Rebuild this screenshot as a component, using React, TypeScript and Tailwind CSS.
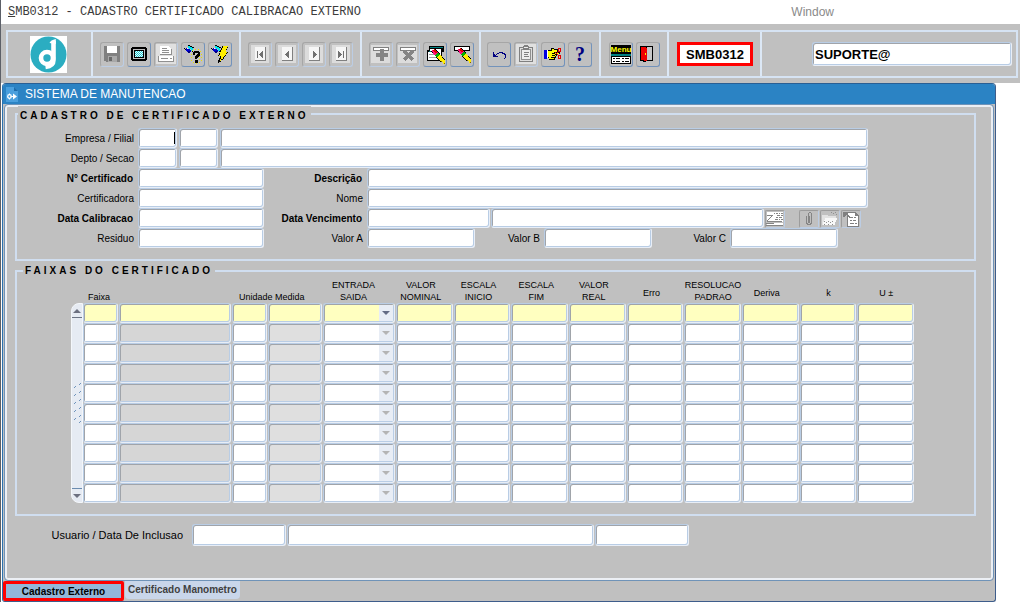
import { useState } from "react";
import type { ReactNode } from "react";
import clsx from "clsx";

const field =
  "block h-5 min-w-0 rounded-[3px] border border-t-[#b9cde5] border-l-[#b9cde5] border-r-[#e8eef7] border-b-[#e8eef7] px-1 text-[11px] outline-none shadow-[inset_1px_1px_0_#a0a4aa,inset_-1px_-1px_0_#b9cde5]";

const columns = [
  "VALOR\nNOMINAL",
  "ESCALA\nINICIO",
  "ESCALA\nFIM",
  "VALOR\nREAL",
  "Erro",
  "RESOLUCAO\nPADRAO",
  "Deriva",
  "k",
  "U ±",
];

const rows = [0, 1, 2, 3, 4, 5, 6, 7, 8, 9];

function Label({ id, bold, className, children }: { id: string; bold?: boolean; className: string; children: ReactNode }) {
  return (
    <label
      htmlFor={id}
      className={clsx("h-5 shrink-0 whitespace-nowrap text-right leading-[22px]", bold ? "pr-[5px] font-bold" : "pr-1", className)}
    >
      {children}
    </label>
  );
}

function ToolButton({ title, disabled, children }: { title: string; disabled?: boolean; children: ReactNode }) {
  return (
    <button
      type="button"
      title={title}
      disabled={disabled}
      className={clsx(
        "flex h-[25px] w-6 shrink-0 items-center justify-center rounded-[3px] border border-t-[#a6a6a6] border-l-[#a6a6a6]",
        disabled ? "border-r-[#bccde4] border-b-[#bccde4]" : "border-r-[#7393bb] border-b-[#7393bb]"
      )}
    >
      <svg width="20" height="20" viewBox="0 0 20 20" shapeRendering="crispEdges" className="shrink-0 overflow-visible">
        {children}
      </svg>
    </button>
  );
}

function NavButton({ title, d }: { title: string; d: string }) {
  return (
    <ToolButton title={title} disabled>
      <path fill="#dcdcdc" d="M1 1h18v18H1z" />
      <path fill="#f6f6f6" d="M5 3h10v13H5z" />
      <path fill="#808080" d="M15 3h1v14H5v-1h10z" />
      <path fill="#707070" d={d} />
    </ToolButton>
  );
}

/* lanterna azul usada nos dois botões de consulta */
function Lantern() {
  return (
    <>
      <path fill="#000" d="M5 1h2v1H5zM7 2h2v1H7zM9 3h2v1H9zM1 4h1v1H1zM2 5h1v1H2zM3 6h1v1H3zM9 7h1v1H9z" />
      <path fill="#00e5f0" d="M5 2h2v1h2v1h1v3H8V5H6V4H5z" />
      <path fill="#0000d0" d="M3 4h2v1h2v1h1v2H7v1H5V8H4V7H3z" />
      <path fill="#000080" d="M5 7h2v2H5z" />
      <path fill="#fff" d="M4 4h1v1H4z" />
    </>
  );
}

/* lápis colorido, em diagonal */
function Pencil() {
  return (
    <>
      <path stroke="#000" strokeWidth="5" d="M6 4l10 11" />
      <path stroke="#ff1080" strokeWidth="4" d="M6 4l3.500 4" />
      <path stroke="#e00000" strokeWidth="2" d="M7 4l3 3" />
      <path stroke="#00b000" strokeWidth="4" d="M9.500 8l2 2" />
      <path stroke="#ffee00" strokeWidth="4" d="M11.500 10l4 4.500" />
      <path fill="#ffee00" d="M14 14h4v4h-2v-2h-2z" />
      <path fill="#806000" d="M17 17h1v1h-1zM14 15h1v1h-1z" />
    </>
  );
}

function Group({ className, children }: { className: string; children: ReactNode }) {
  return <div className={clsx("flex shrink-0 items-center border-r-2 border-[#dce8f6]", className)}>{children}</div>;
}

function Toolbar() {
  return (
    <div className="bg-[#c0c0c0] pt-[6px] pr-[2px] pb-[5px] pl-[5px]">
      <div className="flex h-12 border-2 border-[#d6e3f3]">
        <Group className="w-[85px] pl-[22px]">
          <svg width="37" height="37" viewBox="0 0 37 37">
            <path fill="#fff" d="M0 0h37v37H0z" />
            <circle cx="18.5" cy="18.5" r="18" fill="#2badc1" />
            <circle cx="17" cy="22" r="6" fill="none" stroke="#fff" strokeWidth="4.6" />
            <path d="M23.500 5v19q0 6-8 7" fill="none" stroke="#fff" strokeWidth="4.6" />
            <path d="M19.500 7q1-3 6.300-4v5z" fill="#fff" />
          </svg>
        </Group>
        <Group className="w-[148px] gap-[3px] pl-[7px]">
          <ToolButton title="Salvar" disabled>
            <path fill="#808080" d="M2 2h16v16H4v-1H2z" />
            <path fill="#fff" d="M5 2h10v7H5z" />
            <path fill="#a8a8a8" d="M6 12h9v6H6z" />
            <path fill="#686868" d="M7 13h3v4H7z" />
          </ToolButton>
          <ToolButton title="Tela">
            <path fill="#000" d="M3 3h14v1h1v12h-1v1H3v-1H2V4h1z" />
            <path fill="#c0c0c0" d="M4 5h12v10H4z" />
            <path fill="#000" d="M5 6h10v8H5z" />
            <path fill="#e8ffff" d="M6 7h8v6H6z" />
            <path
              fill="#20c8d0"
              d="M6 7h1v1H6zM8 7h1v1H8zM10 7h1v1h-1zM12 7h1v1h-1zM7 8h1v1H7zM9 8h1v1H9zM11 8h1v1h-1zM13 8h1v1h-1zM6 9h1v1H6zM8 9h1v1H8zM10 9h1v1h-1zM12 9h1v1h-1zM7 10h1v1H7zM9 10h1v1H9zM11 10h1v1h-1zM13 10h1v1h-1zM6 11h1v1H6zM8 11h1v1H8zM10 11h1v1h-1zM12 11h1v1h-1zM7 12h1v1H7zM9 12h1v1H9zM11 12h1v1h-1zM13 12h1v1h-1z"
            />
          </ToolButton>
          <ToolButton title="Imprimir" disabled>
            <path fill="#e0e0e0" d="M0 0h20v20H0z" />
            <path fill="#fff" d="M4 2h8l3 3v6H4zM2 12h16v6H2z" />
            <path fill="#909090" d="M6 4h5v1H6zM6 6h7v1H6zM6 8h7v1H6zM4 10h12v1H4zM2 12h1v6H2zM17 12h1v6h-1zM2 17h16v1H2zM5 14h7v1H5zM14 14h2v1h-2zM15 5h1v5h-1z" />
          </ToolButton>
          <ToolButton title="Entrar consulta">
            <Lantern />
            <path
              fill="#e8e000"
              d="M9 6h1v1H9zM12 5h1v1h-1zM15 5h1v1h-1zM17 7h1v1h-1zM8 10h1v1H8zM8 13h1v1H8zM8 16h1v1H8zM10 18h1v1h-1zM13 19h1v1h-1zM16 18h1v1h-1zM18 10h1v1h-1zM18 13h1v1h-1zM18 16h1v1h-1zM16 15h1v1h-1zM16 12h1v1h-1z"
            />
            <path fill="#000" d="M11 7h5v1h1v4h-1v1h-1v1h-1v1h-2v-3h1v-1h1v-1h1V9h-3v2h-2V8h1zM12 16h3v3h-3z" />
          </ToolButton>
          <ToolButton title="Executar consulta">
            <Lantern />
            <path fill="#000" d="M12 2h6v2h-1v2h-1v2h2v1h-1v1h-1v2h-1v1h-1v2h-1v1h-2v2H9v1H8v-3h1v-2h1v-2H8v-1h1V9h1V6h1V4h1z" />
            <path fill="#ffee00" d="M13 2h5v1h-1v2h-1v3h1v1h-1v2h-1v1h-1v1h-1v2h-2v2h-1v-2h1v-3H9v-1h1V8h1V6h1V4h1z" />
          </ToolButton>
        </Group>
        <Group className="w-[121px] gap-[3px] pl-[7px]">
          <NavButton title="Primeiro" d="M7 7h1v7H7zM12 7h1v7h-1v-1h-1v-1h-1v-1H9v-1h1V9h1V8h1z" />
          <NavButton title="Anterior" d="M11 7h1v7h-1v-1h-1v-1H9v-1H8v-1h1V9h1V8h1z" />
          <NavButton title="Próximo" d="M9 7h1v1h1v1h1v1h1v1h-1v1h-1v1h-1v1H9z" />
          <NavButton title="Último" d="M12 7h1v7h-1zM7 7h1v1h1v1h1v1h1v1h-1v1H9v1H8v1H7z" />
        </Group>
        <Group className="w-[119px] gap-[3px] pl-[7px]">
          <ToolButton title="Inserir" disabled>
            <path fill="#dcdcdc" d="M0 1h19v18H0z" />
            <path fill="#808080" d="M2 3h16v4H2z" />
            <path fill="#fff" d="M3 4h14v2H3z" />
            <path fill="#858585" d="M9 5h4v4h4v4h-4v4H9v-4H5V9h4z" />
          </ToolButton>
          <ToolButton title="Excluir" disabled>
            <path fill="#dcdcdc" d="M0 1h19v18H0z" />
            <path fill="#808080" d="M2 3h16v4H2z" />
            <path fill="#fff" d="M3 4h14v2H3z" />
            <path stroke="#858585" strokeWidth="3" d="M6 7l9 9M15 7l-9 9" />
          </ToolButton>
          <ToolButton title="Limpar tela">
            <path fill="#000" d="M4 2h15v6h-2v9H2V6h2z" />
            <path fill="#008080" d="M5 3h13v1H5z" />
            <path fill="#fff" d="M5 5h11v3H5zM3 8h13v8H3z" />
            <path fill="#a0a0a0" d="M4 10h5v1H4zM4 13h8v1H4z" />
            <path fill="#008080" d="M4 7h5v1H4z" />
            <g transform="translate(2 2)">
              <Pencil />
            </g>
          </ToolButton>
          <ToolButton title="Limpar registro">
            <path fill="#000" d="M2 2h16v5H2z" />
            <path fill="#fff" d="M3 3h14v3H3z" />
            <g transform="translate(1 1)">
              <Pencil />
            </g>
          </ToolButton>
        </Group>
        <Group className="w-[120px] gap-[3px] pl-[6px]">
          <ToolButton title="Desfazer">
            <path fill="#000080" d="M4 8h1v2h1v1h1v1h2v1H4zM7 10h1V9h2V8h4v1h2v1h1v4h-1v1h-1v-1h1v-3h-1v-1h-2V9h-3v1H8v1H7z" />
          </ToolButton>
          <ToolButton title="Colar" disabled>
            <path fill="#e0e0e0" d="M0 0h20v20H0z" />
            <path fill="#808080" d="M3 3h4V2h1V1h4v1h1v1h4v15H3z" />
            <path fill="#dedede" d="M4 4h12v13H4z" />
            <path fill="#909090" d="M5 5h10v11H5z" />
            <path fill="#eee" d="M6 6h8v9H6zM8 3h4v1H8z" />
            <path fill="#808080" d="M7 4h6v2H7zM8 8h5v1H8zM8 10h4v1H8zM8 12h5v1H8z" />
          </ToolButton>
          <ToolButton title="Lista de valores">
            <path fill="#000" d="M4 6h4V4h3v1h4v3h2v2h-3v2h-1v2h-1v2H6v-2H4z" />
            <path fill="#ffff00" d="M5 7h4V5h2v1h3v2h-3v1h5v1h-4v1h1v1h-1v1h-1v2H6v-2H5z" />
            <path fill="#0000e0" d="M1 6h3v9H1z" />
            <path fill="#fff" d="M4 6h1v8H4z" />
            <path fill="#000" d="M9 9h3v1H9zM9 11h3v1H9zM8 13h3v1H8z" />
            <path fill="none" stroke="#e00000" d="M15.500 4.500h2v3h-2zM15.500 11.500h2v3h-2zM12.500 8.500l3 3M12.500 10.500l3-3" />
          </ToolButton>
          <ToolButton title="Ajuda">
            <text x="10" y="17" textAnchor="middle" fontFamily="Liberation Serif, serif" fontWeight="bold" fontSize="20" fill="#000080">
              ?
            </text>
          </ToolButton>
        </Group>
        <Group className="w-[68px] gap-[3px] pl-2">
          <ToolButton title="Menu">
            <path fill="#000" d="M0 1h20v9H0z" />
            <text x="10" y="8" textAnchor="middle" fontFamily="Liberation Sans, sans-serif" fontWeight="bold" fontSize="8" fill="#ffff00">
              Menu
            </text>
            <path fill="#008080" d="M0 10h20v2H0z" />
            <path fill="#000" d="M0 12h20v8H0z" />
            <path fill="#fff" d="M1 13h18v6H1z" />
            <path fill="#000" d="M2 14h2v1H2zM5 14h4v1H5zM11 14h2v1h-2zM14 14h4v1h-4zM2 17h2v1H2zM5 17h4v1H5zM11 17h2v1h-2zM14 17h4v1h-4z" />
          </ToolButton>
          <ToolButton title="Sair">
            <path fill="#000" d="M2 2h13v15H8v1H5v-1H2z" />
            <path fill="#c8c8c8" d="M9 3h5v13H9z" />
            <path fill="#f00000" d="M3 3h5l1 2v12H6v-1H3z" />
            <path fill="#ffee00" d="M7 9h1v2H7z" />
          </ToolButton>
        </Group>
        <Group className="w-[93px] pl-2">
          <span className="h-6 w-[76px] border-[3px] border-[#f00] bg-white text-center text-[13px] leading-[19px] font-bold">SMB0312</span>
        </Group>
        <div className="flex min-w-0 flex-1 items-center justify-end pr-1">
          <input
            aria-label="Usuario"
            readOnly
            value="SUPORTE@"
            className="h-6 w-[200px] min-w-0 rounded-[3px] border border-t-[#b9cde5] border-l-[#b9cde5] border-r-[#e8eef7] border-b-[#e8eef7] bg-white px-[2px] text-[13px] font-bold outline-none shadow-[inset_1px_1px_0_#a0a4aa,inset_-1px_-1px_0_#b9cde5]"
          />
        </div>
      </div>
    </div>
  );
}

function SmallButton({ title, children }: { title: string; children: ReactNode }) {
  return (
    <button
      type="button"
      title={title}
      disabled
      className="flex h-[18px] w-5 shrink-0 items-center justify-center rounded-[2px] border border-t-[#9c9c9c] border-l-[#9c9c9c] border-r-[#bccde4] border-b-[#bccde4]"
    >
      <svg width="18" height="16" viewBox="0 0 18 16" shapeRendering="crispEdges" className="shrink-0">
        {children}
      </svg>
    </button>
  );
}

function Certificado() {
  return (
    <fieldset className="border-2 border-[#d0def0] pb-[11px]">
      <legend className="ml-px bg-[#c0c0c0] px-[2px] pt-1 text-[10px] leading-3 font-bold tracking-[3px]">
        CADASTRO DE CERTIFICADO EXTERNO
      </legend>
      <div className="pt-[6px] pr-[106px]">
        <div className="flex">
          <Label id="empresa" className="w-[121px]">
            Empresa / Filial
          </Label>
          <div className="flex min-w-0 flex-1 gap-[2px]">
            <div className="relative">
              <input id="empresa" className={clsx(field, "w-[39px] bg-white")} />
              <span className="absolute top-1 right-[2px] h-3 w-px bg-black" />
            </div>
            <input aria-label="Filial" className={clsx(field, "w-[39px] bg-white")} />
            <input aria-label="Nome da filial" className={clsx(field, "flex-1 bg-white")} />
          </div>
        </div>
        <div className="flex">
          <Label id="depto" className="w-[121px]">
            Depto / Secao
          </Label>
          <div className="flex min-w-0 flex-1 gap-[2px]">
            <input id="depto" className={clsx(field, "w-[39px] bg-white")} />
            <input aria-label="Secao" className={clsx(field, "w-[39px] bg-white")} />
            <input aria-label="Nome da secao" className={clsx(field, "flex-1 bg-white")} />
          </div>
        </div>
        <div className="flex">
          <Label id="numero" bold className="w-[121px]">
            N° Certificado
          </Label>
          <input id="numero" className={clsx(field, "w-[126px] bg-white")} />
          <Label id="descricao" bold className="w-[103px]">
            Descrição
          </Label>
          <input id="descricao" className={clsx(field, "flex-1 bg-white")} />
        </div>
        <div className="flex">
          <Label id="certificadora" className="w-[121px]">
            Certificadora
          </Label>
          <input id="certificadora" className={clsx(field, "w-[126px] bg-white")} />
          <Label id="nome" className="w-[103px]">
            Nome
          </Label>
          <input id="nome" className={clsx(field, "flex-1 bg-white")} />
        </div>
        <div className="flex">
          <Label id="calibracao" bold className="w-[121px]">
            Data Calibracao
          </Label>
          <input id="calibracao" className={clsx(field, "w-[126px] bg-white")} />
          <Label id="vencimento" bold className="w-[103px]">
            Data Vencimento
          </Label>
          <input id="vencimento" className={clsx(field, "w-[123px] bg-white")} />
          <input aria-label="Observacao do vencimento" className={clsx(field, "ml-px flex-1 bg-white")} />
          <div className="flex w-[104px] shrink-0 items-end gap-px pl-px">
            <SmallButton title="Editar">
              <path fill="#fff" d="M1 1h16v10H1zM1 12h16v2H1z" />
              <path
                fill="#858585"
                d="M8 2h1v1H8zM10 2h2v1h-2zM13 2h1v1h-1zM15 2h2v1h-2zM11 4h3v1h-3zM15 4h2v1h-2zM10 6h2v1h-2zM13 6h3v1h-3zM9 8h3v1H9zM13 8h1v1h-1zM15 8h2v1h-2zM1 4h6v1H6v1H5v1H4v1H3v1H2v1h14v1H1V9h1V8h1V7h1V6h1V5H1zM0 14h17v1H0zM0 12h8v1H0z"
              />
            </SmallButton>
            <span className="w-3" />
            <SmallButton title="Anexar">
              <path
                fill="none"
                stroke="#858585"
                d="M6.500 4.500v7l1 2h3l1-2v-9l-1-1h-1l-1 1v9h1v-7"
              />
            </SmallButton>
            <SmallButton title="Abrir pasta">
              <path fill="#e2e2e2" d="M1 4h6v1h8v3h-1v6H1z" />
              <path fill="#f8f8f8" d="M4 7h12v2h-1v2h-1v3H2v-3h1V9h1z" />
              <path fill="#909090" d="M10 1h1v1h-1zM12 2h1v1h-1zM14 1h1v1h-1zM15 3h1v1h-1zM3 10h1v1H3zM5 11h1v1H5zM7 10h1v1H7zM9 11h1v1H9zM11 10h1v1h-1zM3 13h1v1H3zM7 13h1v1H7zM11 13h1v1h-1z" />
            </SmallButton>
            <SmallButton title="Ver documento">
              <path fill="#808080" d="M5 1h9v1h1v1h1v1h1v12H5z" />
              <path fill="#fff" d="M6 2h7v3h3v10H6z" />
              <path fill="#808080" d="M1 1h5v1H5v1h1v1h1v1h1v2H7V6H6V5H5V4H4v1H3v1H1zM8 6h3v1H8zM12 6h2v1h-2zM8 9h2v1H8zM11 9h3v1h-3zM8 12h4v1H8zM13 12h2v1h-2z" />
            </SmallButton>
          </div>
        </div>
        <div className="flex">
          <Label id="residuo" className="w-[121px]">
            Residuo
          </Label>
          <input id="residuo" className={clsx(field, "w-[126px] bg-white")} />
          <Label id="valorA" className="w-[103px]">
            Valor A
          </Label>
          <input id="valorA" className={clsx(field, "w-[108px] bg-white")} />
          <Label id="valorB" className="w-[69px]">
            Valor B
          </Label>
          <input id="valorB" className={clsx(field, "w-[108px] bg-white")} />
          <Label id="valorC" className="w-[78px]">
            Valor C
          </Label>
          <input id="valorC" className={clsx(field, "w-[108px] bg-white")} />
        </div>
      </div>
    </fieldset>
  );
}

function ScrollBar() {
  return (
    <div className="mt-6 flex w-3 shrink-0 flex-col rounded-l-lg border border-[#f4f7fb] bg-[#e6ebf3]">
      <button type="button" title="Subir" className="flex h-[14px] items-center justify-center border-b border-[#6c7484]">
        <svg width="8" height="4" viewBox="0 0 8 4">
          <path fill="#6c7080" d="M4 0l4 4H0z" />
        </svg>
      </button>
      <div className="flex flex-1 items-center">
        <svg width="10" height="42" viewBox="0 0 10 42" shapeRendering="crispEdges">
          <path
            stroke="#6f94bc"
            d="M2 6l2-2M2 14l2-2M2 22l2-2M2 30l2-2M2 38l2-2M7 3l2-2M7 11l2-2M7 19l2-2M7 27l2-2M7 35l2-2M7 41l2-2"
          />
        </svg>
      </div>
      <button type="button" title="Descer" className="flex h-[14px] items-center justify-center border-t border-[#6c8cb0]">
        <svg width="8" height="4" viewBox="0 0 8 4">
          <path fill="#6c7080" d="M0 0h8L4 4z" />
        </svg>
      </button>
    </div>
  );
}

function Faixas() {
  return (
    <fieldset className="mt-[2px] border-2 border-[#d0def0] pb-[11px]">
      <legend className="ml-[6px] bg-[#c0c0c0] px-[2px] text-[10px] leading-4 font-bold tracking-[3px]">FAIXAS DO CERTIFICADO</legend>
      <div className="flex pr-[59px] pl-[54px]">
        <ScrollBar />
        <div className="min-w-0 flex-1">
          <table className="w-full table-fixed border-collapse">
            <colgroup>
              <col className="w-9" />
              <col className="w-[113px]" />
              <col className="w-9" />
              <col className="w-[55px]" />
              <col className="w-[73px]" />
              {columns.map((c) => (
                <col key={c} />
              ))}
            </colgroup>
            <thead>
              <tr className="h-6 align-bottom text-[9px] leading-3">
                <th className="p-0 pr-1 font-normal">Faixa</th>
                <th />
                <th colSpan={2} className="p-0 pl-[7px] text-left font-normal">
                  Unidade Medida
                </th>
                <th className="p-0 pr-3 font-normal whitespace-pre">{"ENTRADA\nSAIDA"}</th>
                {columns.map((c) => (
                  <th
                    key={c}
                    className={clsx(
                      "p-0 font-normal whitespace-pre",
                      !c.includes("\n") && "pb-1",
                      !c.startsWith("RESOLUCAO") && c.length > 3 && "pr-2"
                    )}
                  >
                    {c}
                  </th>
                ))}
              </tr>
            </thead>
            <tbody>
              {rows.map((r) => {
                const bg = r === 0 ? "bg-[#ffffc0]" : "bg-white";
                return (
                  <tr key={r}>
                    <td className="p-0 pr-px">
                      <input aria-label={`Faixa ${r + 1}`} className={clsx(field, "w-full", bg)} />
                    </td>
                    <td className="p-0 pr-px">
                      <input
                        aria-label={`Descricao da faixa ${r + 1}`}
                        readOnly
                        className={clsx(field, "w-full", r === 0 ? "bg-[#ffffc0]" : "bg-[#d6d6d6]")}
                      />
                    </td>
                    <td className="p-0 pr-px">
                      <input aria-label={`Unidade ${r + 1}`} className={clsx(field, "w-full", bg)} />
                    </td>
                    <td className="p-0 pr-px">
                      <input
                        aria-label={`Medida ${r + 1}`}
                        readOnly
                        className={clsx(field, "w-full", r === 0 ? "bg-[#ffffc0]" : "bg-[#dfdfdf]")}
                      />
                    </td>
                    <td className="p-0 pr-px">
                      <div className="relative">
                        <select aria-label={`Entrada ou saida ${r + 1}`} defaultValue="" className={clsx(field, "w-full appearance-none", bg)}>
                          <option value=""></option>
                          <option value="E">Entrada</option>
                          <option value="S">Saida</option>
                        </select>
                        <svg width="14" height="16" viewBox="0 0 14 16" className="pointer-events-none absolute top-[2px] right-[2px]">
                          <path fill="#e8edf5" d="M0 0h14v16H0z" />
                          <path fill={r === 0 ? "#646c84" : "#b4b4b4"} d="M3 6h8l-4 4z" />
                        </svg>
                      </div>
                    </td>
                    {columns.map((c) => (
                      <td key={c} className="p-0 pr-px">
                        <input aria-label={`${c.replace("\n", " ")} ${r + 1}`} className={clsx(field, "w-full", bg)} />
                      </td>
                    ))}
                  </tr>
                );
              })}
            </tbody>
          </table>
        </div>
      </div>
    </fieldset>
  );
}

export default function App() {
  const [tab, setTab] = useState("externo");

  return (
    <div className="border-l border-[#5c6068] bg-white font-['Liberation_Sans',Arial,sans-serif] text-[10px] text-black">
      <nav className="flex h-6 items-center justify-between pr-[186px] pl-[7px]">
        <button type="button" className="font-['Liberation_Mono','Courier_New',monospace] text-[12px] whitespace-nowrap text-[#3c3c3c]">
          <span className="underline">S</span>MB0312 - CADASTRO CERTIFICADO CALIBRACAO EXTERNO
        </button>
        <button type="button" className="text-[12px] text-[#8a8a8a]">
          Window
        </button>
      </nav>
      <Toolbar />

      <main className="mr-6 ml-px rounded-t-[4px] rounded-b-[3px] border border-t-[#2a5f94] border-r-[#3e5d8b] border-b-[#3e5d8b] border-l-[#2b72b0] bg-[#c0c0c0]">
        <header className="flex h-5 items-center gap-[7px] rounded-t-[3px] bg-[#2b83c4] pl-[3px] text-white">
          <svg width="12" height="15" viewBox="0 0 12 15">
            <path fill="#4a9fdd" d="M0 0h8l4 4v11H0z" />
            <path fill="#1e6dab" d="M8 0l4 4H8z" />
            <path fill="#fff" d="M7 6.500l4 3-4 3z" />
            <circle cx="3.500" cy="9.500" r="1.800" fill="none" stroke="#fff" strokeWidth="1.300" />
            <path stroke="#fff" d="M3.500 6.500v1.500M3.500 11v1.500M4.500 9.500h3" />
          </svg>
          <h1 className="text-[12px] leading-5">SISTEMA DE MANUTENCAO</h1>
        </header>

        <div className="mx-px rounded-[4px] border border-[#6f93b8] pt-px pr-[17px] pb-[34px] pl-[10px] shadow-[inset_0_0_0_2px_#eceff4]">
          <Certificado />
          <Faixas />
          <div className="mt-2 flex gap-px">
            <label htmlFor="usuario" className="w-[176px] shrink-0 pr-2 text-right text-[11px] leading-[22px]">
              Usuario / Data De Inclusao
            </label>
            <input id="usuario" className={clsx(field, "h-[22px] w-[94px] bg-white")} />
            <input aria-label="Nome do usuario" className={clsx(field, "h-[22px] w-[307px] bg-white")} />
            <input aria-label="Data de inclusao" className={clsx(field, "h-[22px] w-[94px] bg-white")} />
          </div>
        </div>

        <div role="tablist" className="flex gap-px">
          <button
            type="button"
            role="tab"
            aria-selected={tab === "externo"}
            onClick={() => setTab("externo")}
            className="h-5 w-[121px] rounded-[2px] border-[3px] border-[#f00] bg-[#93b7d9] text-center leading-[13px] font-bold"
          >
            Cadastro Externo
          </button>
          <button
            type="button"
            role="tab"
            aria-selected={tab === "manometro"}
            onClick={() => setTab("manometro")}
            className="h-[18px] w-[115px] rounded-b-[4px] bg-[#c9d6ea] text-center leading-4 font-bold text-[#404040]"
          >
            Certificado Manometro
          </button>
        </div>
      </main>
    </div>
  );
}
